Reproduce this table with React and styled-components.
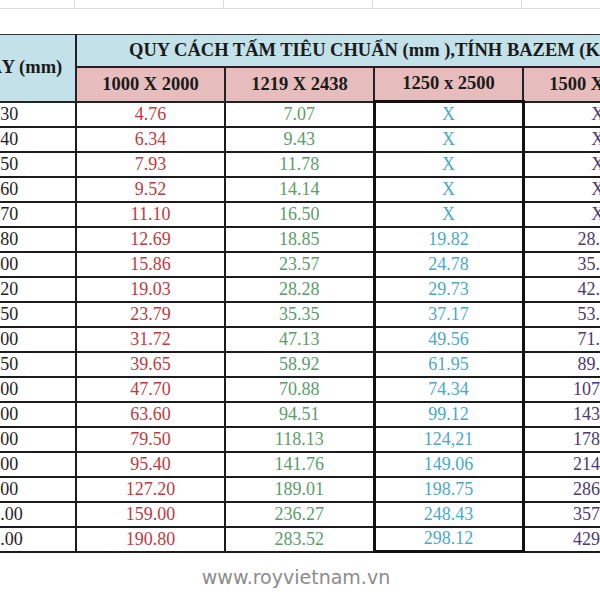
import styled, { createGlobalStyle } from 'styled-components';

const GlobalStyle = createGlobalStyle`
  html, body {
    margin: 0;
    padding: 0;
    background: #ffffff;
    overflow: hidden;
  }
`;

const COLS = [147, 149, 149, 149, 149];

const rows = [
  ['0.30', '4.76', '7.07', 'X', 'X'],
  ['0.40', '6.34', '9.43', 'X', 'X'],
  ['0.50', '7.93', '11.78', 'X', 'X'],
  ['0.60', '9.52', '14.14', 'X', 'X'],
  ['0.70', '11.10', '16.50', 'X', 'X'],
  ['0.80', '12.69', '18.85', '19.82', '28.55'],
  ['1.00', '15.86', '23.57', '24.78', '35.69'],
  ['1.20', '19.03', '28.28', '29.73', '42.82'],
  ['1.50', '23.79', '35.35', '37.17', '53.53'],
  ['2.00', '31.72', '47.13', '49.56', '71.37'],
  ['2.50', '39.65', '58.92', '61.95', '89.21'],
  ['3.00', '47.70', '70.88', '74.34', '107.33'],
  ['4.00', '63.60', '94.51', '99.12', '143.10'],
  ['5.00', '79.50', '118.13', '124,21', '178.88'],
  ['6.00', '95.40', '141.76', '149.06', '214.65'],
  ['8.00', '127.20', '189.01', '198.75', '286.20'],
  ['10.00', '159.00', '236.27', '248.43', '357.75'],
  ['12.00', '190.80', '283.52', '298.12', '429.30'],
];

const COLORS = ['#1e1e1e', '#c03a3e', '#5b9c69', '#4aa9c7', '#4b3a6e'];

const Page = styled.div`
  width: 600px;
  height: 600px;
  overflow: hidden;
  position: relative;
  font-family: 'Liberation Serif', 'Times New Roman', serif;
`;

const Shifted = styled.div`
  margin-left: -72px;
  width: 743px;
`;

const GridStrip = styled.div`
  display: flex;
  height: 8px;
  border-bottom: 1px solid #dcdcdc;
  margin-bottom: 25px;
`;

const GridCell = styled.div`
  flex: 0 0 ${({ $w }) => $w}px;
  box-sizing: border-box;
  border-right: 1px solid #dcdcdc;
`;

const Table = styled.table`
  border-collapse: collapse;
  table-layout: fixed;
  width: 743px;
  border-top: 1px solid #333;
`;

const HeadCell = styled.th`
  background: ${({ $pink }) => ($pink ? '#e7bcbc' : '#c3e1e9')};
  border: 2px solid #222;
  color: #1a1a1a;
  font-weight: bold;
  font-size: 18.5px;
  white-space: nowrap;
  overflow: visible;
  padding: 0;
  text-align: ${({ $left }) => ($left ? 'left' : 'center')};
  padding-left: ${({ $left }) => ($left ? '52px' : '0')};
  height: ${({ $h }) => $h}px;
  box-sizing: border-box;
  ${({ $bold }) => $bold && 'border-bottom: 3px solid #111;'}
`;

const TitleCell = styled(HeadCell)`
  border-top: 1px solid #333;
  padding-top: 0;
`;

const Cell = styled.td`
  border: 2px solid #1c1c1c;
  height: 25px;
  padding: 0;
  box-sizing: border-box;
  text-align: center;
  font-size: 18px;
  line-height: 21px;
  color: ${({ $c }) => $c};
  white-space: nowrap;
  ${({ $thick }) => $thick && 'border-left: 3px solid #111; border-right: 3px solid #111;'}
  ${({ $last }) => $last && 'border-bottom: 3px solid #111;'}
`;

const Footer = styled.div`
  text-align: center;
  margin-top: 13px;
  padding-right: 8px;
  font-family: 'DejaVu Sans', 'Liberation Sans', sans-serif;
  font-weight: 400;
  font-size: 19px;
  color: #8c8c8c;
`;

export default function App() {
  return (
    <Page>
      <GlobalStyle />
      <Shifted>
        <GridStrip>
          {COLS.map((w, i) => (
            <GridCell key={i} $w={w} />
          ))}
        </GridStrip>
        <Table>
          <colgroup>
            {COLS.map((w, i) => (
              <col key={i} style={{ width: w }} />
            ))}
          </colgroup>
          <thead>
            <tr>
              <TitleCell rowSpan={2} $h={67}>ĐỘ DÀY (mm)</TitleCell>
              <TitleCell colSpan={4} $left $h={32}>
                QUY CÁCH TẤM TIÊU CHUẨN (mm ),TÍNH BAZEM (KG/TẤM)
              </TitleCell>
            </tr>
            <tr>
              <HeadCell $pink $h={35}>1000 X 2000</HeadCell>
              <HeadCell $pink $h={35}>1219 X 2438</HeadCell>
              <HeadCell $pink $h={35} $bold>1250 x 2500</HeadCell>
              <HeadCell $pink $h={35}>1500 X 3000</HeadCell>
            </tr>
          </thead>
          <tbody>
            {rows.map((r, ri) => (
              <tr key={ri}>
                {r.map((v, ci) => (
                  <Cell
                    key={ci}
                    $c={COLORS[ci]}
                    $thick={ci === 3}
                    $last={ci === 3 && ri === rows.length - 1}
                  >
                    {v}
                  </Cell>
                ))}
              </tr>
            ))}
          </tbody>
        </Table>
      </Shifted>
      <Footer>www.royvietnam.vn</Footer>
    </Page>
  );
}
